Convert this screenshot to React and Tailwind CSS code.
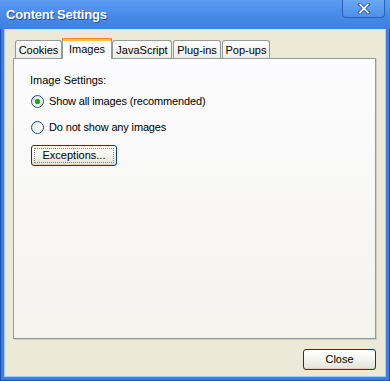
import React from 'react';

const font = { fontFamily: '"Liberation Sans", Arial, sans-serif' };

function Tab({ label, selected, className }) {
  if (selected) {
    return (
      <div
        className={`relative z-10 -mb-px flex h-[21px] items-start justify-center border-x border-[#919b9c] bg-white pt-[3px] text-[11px] text-black ${className}`}
      >
        <div className="absolute -left-px -right-px top-0 h-[3px] rounded-t-[3px] border-x border-t border-[#e68b2c] bg-[#ffc73c]" />
        {label}
      </div>
    );
  }
  return (
    <div
      className={`flex h-[18px] items-center justify-center rounded-t-[3px] border border-b-0 border-[#919b9c] bg-gradient-to-b from-white to-[#ecebe6] pt-[1px] text-[11px] text-black ${className}`}
    >
      {label}
    </div>
  );
}

function Radio({ checked, label }) {
  return (
    <div className="flex h-[16px] items-center gap-[5px]">
      <span className="flex h-[13px] w-[13px] items-center justify-center rounded-full border border-[#1c5180] bg-gradient-to-br from-[#dcdcd7] via-[#f5f5f2] to-white">
        {checked && <span className="h-[5px] w-[5px] rounded-full bg-[#21a121] shadow-[0_0_1px_#4bc94b]" />}
      </span>
      <span className="text-[11px] tracking-[-0.15px] text-black">{label}</span>
    </div>
  );
}

function XpButton({ children, className }) {
  return (
    <button
      type="button"
      className={`flex h-[21px] items-center justify-center rounded-[3px] border border-[#003c74] bg-gradient-to-b from-white via-[#f4f4f0] to-[#e3e2da] text-[11px] text-black shadow-[inset_0_-1px_0_#d6d0c5] ${className}`}
    >
      {children}
    </button>
  );
}

export default function App() {
  return (
    <div className="flex h-[381px] w-[390px] flex-col overflow-hidden bg-[#0831d9]" style={font}>
      {/* title bar */}
      <div className="relative flex h-[29px] shrink-0 items-center bg-gradient-to-b from-[#5c9cf2] via-[#4a8be8] to-[#3d7fe3] pl-[6px]">
        <span className="text-[13px] font-bold tracking-[-0.2px] text-white [text-shadow:1px_1px_0_#1c4fb0]">Content Settings</span>
        <div className="absolute right-[5px] top-0 flex h-[18px] w-[43px] items-center justify-center rounded-b-[4px] border border-t-0 border-[#2a5fb8] bg-gradient-to-b from-[#6aa8f5] to-[#4d8fec]">
          <svg width="12" height="11" viewBox="0 0 12 11">
            <path d="M2 1.5 L10 9.5 M10 1.5 L2 9.5" stroke="#3a5f9f" strokeWidth="3.4" strokeLinecap="square" />
            <path d="M2 1.5 L10 9.5 M10 1.5 L2 9.5" stroke="#ffffff" strokeWidth="1.6" strokeLinecap="square" />
          </svg>
        </div>
      </div>

      {/* frame */}
      <div className="flex flex-1 border-b border-l border-r border-[#1d4fb2] bg-[#3f7ee0] px-[3px] pb-[3px]">
        <div className="flex flex-1 flex-col border-b border-l border-r border-[#a9c8f3] bg-[#ece9d8] pl-[8px] pr-[9px] pt-[9px]">
          {/* tabs */}
          <div className="flex items-end pl-[2px]">
            <Tab label="Cookies" className="w-[47px]" />
            <Tab label="Images" selected className="w-[50px]" />
            <Tab label="JavaScript" className="w-[60px]" />
            <Tab label="Plug-ins" className="ml-px w-[48px]" />
            <Tab label="Pop-ups" className="ml-px w-[48px]" />
          </div>

          {/* panel */}
          <div className="flex h-[281px] flex-col border border-[#919b9c] bg-gradient-to-b from-[#fcfcfe] to-[#f4f3ee] pl-[16px] pt-[13px] shadow-[1px_1px_0_#d0cec1]">
            <div className="h-[16px] text-[11px] leading-[16px] text-black">Image Settings:</div>
            <div className="mt-[5px] flex flex-col gap-[10px] pl-px">
              <Radio checked label="Show all images (recommended)" />
              <Radio label="Do not show any images" />
            </div>
            <XpButton className="ml-px mt-[10px] w-[86px] outline outline-1 outline-offset-[-4px] outline-dotted outline-[#7d7d7d]">
              Exceptions...
            </XpButton>
          </div>

          {/* footer */}
          <div className="flex flex-1 items-start justify-end pt-[10px]">
            <XpButton className="w-[73px]">Close</XpButton>
          </div>
        </div>
      </div>
    </div>
  );
}
